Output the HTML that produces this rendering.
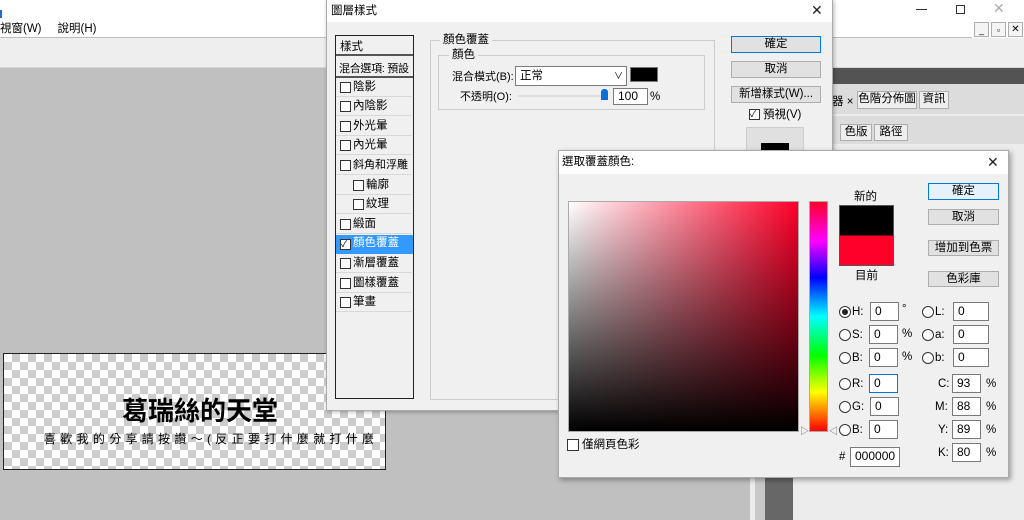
<!DOCTYPE html>
<html><head><meta charset="utf-8"><style>
*{box-sizing:border-box;margin:0;padding:0}
body{width:1024px;height:520px;overflow:hidden;position:relative;background:#c0c0c0;font-family:"Liberation Sans","Noto Sans CJK TC",sans-serif;font-size:12px;color:#000}
.a{position:absolute}
.t{position:absolute;white-space:nowrap;font-size:11.5px;line-height:14px}
.btn{position:absolute;background:#e1e1e1;border:1px solid #adadad;text-align:center;font-size:11.5px;line-height:14px;white-space:nowrap;overflow:hidden}
.inp{position:absolute;background:#fff;border:1px solid #7a7a7a;font-size:12px;line-height:17px;padding-left:4px}
.cb{position:absolute;width:11px;height:11px;border:1px solid #333;background:#fff}
.rd{position:absolute;width:12px;height:12px;border:1px solid #333;border-radius:50%;background:#fff}
.row{position:absolute;left:336px;width:76px;height:19px;border-bottom:1px solid #d8d8d8}
.x{position:absolute;font-size:14px;line-height:14px;font-family:"DejaVu Sans",sans-serif;font-weight:normal;color:#222}
</style></head><body>
<!-- app chrome -->
<div class="a" style="left:0;top:0;width:1024px;height:38px;background:#fff"></div>
<div class="a" style="left:0;top:10px;width:2px;height:8px;background:#1e6bd6"></div>
<div class="t" style="left:0;top:22px">視窗(W)&nbsp;&nbsp;&nbsp;&nbsp;&nbsp;說明(H)</div>
<div class="a" style="left:0;top:37px;width:1024px;height:31px;background:#eeeeee;border-top:1px solid #bdbdbd;border-bottom:1px solid #d6d6d6"></div>
<div class="a" style="left:916px;top:9px;width:11px;height:1px;background:#333"></div>
<div class="a" style="left:956px;top:5px;width:9px;height:9px;border:1px solid #333"></div>
<div class="x" style="left:993px;top:2px;color:#aaa">✕</div>
<div class="a" style="left:972px;top:22px;width:52px;height:16px;background:#fff"></div>
<div class="btn" style="left:974px;top:22px;width:15px;height:15px;font-size:9px;background:#f4f4f4">_</div>
<div class="btn" style="left:991px;top:22px;width:15px;height:15px;font-size:9px;background:#f4f4f4">▫</div>
<div class="btn" style="left:1008px;top:22px;width:15px;height:15px;font-size:10px;background:#f4f4f4">✕</div>
<!-- right panels -->
<div class="a" style="left:750px;top:68px;width:274px;height:452px;background:#ececec"></div>
<div class="a" style="left:830px;top:68px;width:194px;height:16px;background:#535353"></div>
<div class="a" style="left:830px;top:84px;width:194px;height:30px;background:#dcdcdc"></div>
<div class="btn" style="left:857px;top:91px;width:60px;height:18px;background:#eee">色階分佈圖</div>
<div class="btn" style="left:919px;top:91px;width:30px;height:18px;background:#eee">資訊</div>
<div class="t" style="left:832px;top:95px">器 ×</div>
<div class="a" style="left:830px;top:116px;width:194px;height:28px;background:#dcdcdc"></div>
<div class="btn" style="left:840px;top:124px;width:32px;height:17px;background:#eee">色版</div>
<div class="btn" style="left:874px;top:124px;width:34px;height:17px;background:#eee">路徑</div>
<div class="a" style="left:755px;top:476px;width:10px;height:44px;background:#c8c8c8"></div>
<div class="a" style="left:765px;top:476px;width:28px;height:44px;background:#676767"></div>
<!-- document canvas -->
<div class="a" style="left:3px;top:353px;width:383px;height:117px;border:1px solid #222;background-color:#fff;background-image:linear-gradient(45deg,#ccc 25%,transparent 25%,transparent 75%,#ccc 75%),linear-gradient(45deg,#ccc 25%,transparent 25%,transparent 75%,#ccc 75%);background-size:16px 16px;background-position:0 0,8px 8px"></div>
<div class="t" style="left:122px;top:396px;font-size:26px;line-height:30px;font-weight:bold">葛瑞絲的天堂</div>
<div class="t" style="left:44px;top:432px;font-size:12px;letter-spacing:4.3px">喜歡我的分享請按讚～(反正要打什麼就打什麼</div>
<!-- layer style dialog -->
<div class="a" style="left:326px;top:0;width:507px;height:411px;background:#f0f0f0;border:1px solid #aaa;box-shadow:1px 1px 4px rgba(0,0,0,.3)"></div>
<div class="a" style="left:327px;top:0;width:505px;height:22px;background:#fff"></div>
<div class="t" style="left:331px;top:4px">圖層樣式</div>
<div class="x" style="left:811px;top:4px">✕</div>
<div class="a" style="left:335px;top:35px;width:79px;height:364px;border:1px solid #222;background:#f0f0f0"></div>
<div class="a" style="left:336px;top:36px;width:77px;height:20px;border-bottom:2px solid #555"></div>
<div class="t" style="left:340px;top:40px">樣式</div>
<div class="a" style="left:336px;top:58px;width:77px;height:20px;border-bottom:2px solid #555"></div>
<div class="t" style="left:339px;top:62px;font-size:11px;letter-spacing:-0.3px">混合選項: 預設</div>
<div class="row" style="top:78px"></div><div class="cb" style="left:340px;top:82px"></div><div class="t" style="left:353px;top:80px">陰影</div>
<div class="row" style="top:97px"></div><div class="cb" style="left:340px;top:101px"></div><div class="t" style="left:353px;top:99px">內陰影</div>
<div class="row" style="top:117px"></div><div class="cb" style="left:340px;top:121px"></div><div class="t" style="left:353px;top:119px">外光暈</div>
<div class="row" style="top:136px"></div><div class="cb" style="left:340px;top:140px"></div><div class="t" style="left:353px;top:138px">內光暈</div>
<div class="row" style="top:156px"></div><div class="cb" style="left:340px;top:160px"></div><div class="t" style="left:353px;top:158px;font-size:11px">斜角和浮雕</div>
<div class="row" style="top:176px"></div><div class="cb" style="left:353px;top:180px"></div><div class="t" style="left:366px;top:178px">輪廓</div>
<div class="row" style="top:195px"></div><div class="cb" style="left:353px;top:199px"></div><div class="t" style="left:366px;top:197px">紋理</div>
<div class="row" style="top:215px"></div><div class="cb" style="left:340px;top:219px"></div><div class="t" style="left:353px;top:217px">緞面</div>
<div class="a" style="left:336px;top:235px;width:77px;height:19px;background:#3399ff"></div><div class="cb" style="left:340px;top:239px;font-size:9px;line-height:9px">✓</div><div class="t" style="left:353px;top:236px;color:#fff">顏色覆蓋</div>
<div class="row" style="top:254px"></div><div class="cb" style="left:340px;top:258px"></div><div class="t" style="left:353px;top:256px">漸層覆蓋</div>
<div class="row" style="top:274px"></div><div class="cb" style="left:340px;top:278px"></div><div class="t" style="left:353px;top:276px">圖樣覆蓋</div>
<div class="row" style="top:293px"></div><div class="cb" style="left:340px;top:297px"></div><div class="t" style="left:353px;top:295px">筆畫</div>
<div class="a" style="left:430px;top:40px;width:285px;height:360px;border:1px solid #ccc"></div>
<div class="t" style="left:440px;top:33px;background:#f0f0f0;padding:0 3px">顏色覆蓋</div>
<div class="a" style="left:438px;top:55px;width:267px;height:55px;border:1px solid #ccc"></div>
<div class="t" style="left:449px;top:48px;background:#f0f0f0;padding:0 3px">顏色</div>
<div class="t" style="left:452px;top:70px;font-size:11px">混合模式(B):</div>
<div class="a" style="left:515px;top:66px;width:112px;height:20px;border:1px solid #7a7a7a;background:#fff"></div>
<div class="t" style="left:520px;top:69px">正常</div>
<div class="t" style="left:614px;top:69px;font-size:9px">∨</div>
<div class="a" style="left:630px;top:67px;width:28px;height:15px;background:#000;border:1px solid #777"></div>
<div class="t" style="left:460px;top:90px;font-size:11px">不透明(O):</div>
<div class="a" style="left:518px;top:95px;width:90px;height:2px;background:#ddd"></div>
<div class="a" style="left:601px;top:89px;width:7px;height:11px;background:#0a6fd6;border-radius:3px 3px 0 0"></div>
<div class="inp" style="left:613px;top:88px;width:35px;height:17px;line-height:15px">100</div>
<div class="t" style="left:650px;top:90px">%</div>
<div class="btn" style="left:731px;top:36px;width:90px;height:17px;border:1px solid #0078d7">確定</div>
<div class="btn" style="left:731px;top:61px;width:90px;height:17px">取消</div>
<div class="btn" style="left:731px;top:86px;width:90px;height:17px">新增樣式(W)...</div>
<div class="cb" style="left:749px;top:109px;font-size:9px;line-height:9px">✓</div>
<div class="t" style="left:763px;top:108px">預視(V)</div>
<div class="a" style="left:746px;top:127px;width:58px;height:30px;background:#e0e0e0;border:1px solid #ccc"></div>
<div class="a" style="left:761px;top:143px;width:28px;height:10px;background:#000"></div>
<!-- color picker -->
<div class="a" style="left:558px;top:150px;width:451px;height:328px;background:#f0f0f0;border:1px solid #aaa;box-shadow:2px 2px 5px rgba(0,0,0,.35)"></div>
<div class="a" style="left:559px;top:151px;width:449px;height:23px;background:#fff"></div>
<div class="t" style="left:562px;top:155px">選取覆蓋顏色:</div>
<div class="x" style="left:987px;top:156px">✕</div>
<div class="a" style="left:568px;top:201px;width:231px;height:231px;border:1px solid #aaa;background:linear-gradient(to bottom,rgba(0,0,0,0),#000),linear-gradient(to right,#fff,#ff0028)"></div>
<div class="a" style="left:809px;top:201px;width:19px;height:231px;border:1px solid #aaa;background:linear-gradient(to bottom,#ff0028,#ff00ff 17%,#0000ff 33%,#00ffff 50%,#00ff00 67%,#ffff00 83%,#ff0000)"></div>
<div class="t" style="left:800px;top:424px;font-size:9px;color:#666">▷</div>
<div class="t" style="left:829px;top:424px;font-size:9px;color:#666">◁</div>
<div class="cb" style="left:567px;top:439px;width:12px;height:12px"></div>
<div class="t" style="left:582px;top:438px">僅網頁色彩</div>
<div class="t" style="left:854px;top:190px">新的</div>
<div class="a" style="left:839px;top:205px;width:55px;height:61px;border:1px solid #555;background:linear-gradient(#000 50%,#ff0028 50%)"></div>
<div class="t" style="left:855px;top:269px">目前</div>
<div class="btn" style="left:928px;top:183px;width:71px;height:17px;background:#e5f1fb;border:1px solid #0078d7">確定</div>
<div class="btn" style="left:928px;top:209px;width:71px;height:16px">取消</div>
<div class="btn" style="left:928px;top:240px;width:71px;height:16px">增加到色票</div>
<div class="btn" style="left:928px;top:271px;width:71px;height:16px">色彩庫</div>
<!-- HSB -->
<div class="rd" style="left:839px;top:306px"></div><div class="a" style="left:842px;top:309px;width:6px;height:6px;border-radius:50%;background:#222"></div>
<div class="t" style="left:852px;top:305px">H:</div><div class="inp" style="left:870px;top:302px;width:29px;height:19px">0</div><div class="t" style="left:902px;top:302px">°</div>
<div class="rd" style="left:839px;top:329px"></div><div class="t" style="left:852px;top:328px">S:</div><div class="inp" style="left:869px;top:325px;width:29px;height:19px">0</div><div class="t" style="left:902px;top:327px">%</div>
<div class="rd" style="left:839px;top:352px"></div><div class="t" style="left:852px;top:351px">B:</div><div class="inp" style="left:869px;top:348px;width:29px;height:19px">0</div><div class="t" style="left:902px;top:350px">%</div>
<div class="rd" style="left:922px;top:306px"></div><div class="t" style="left:935px;top:305px">L:</div><div class="inp" style="left:953px;top:302px;width:36px;height:19px">0</div>
<div class="rd" style="left:922px;top:329px"></div><div class="t" style="left:935px;top:328px">a:</div><div class="inp" style="left:953px;top:325px;width:36px;height:19px">0</div>
<div class="rd" style="left:922px;top:352px"></div><div class="t" style="left:935px;top:351px">b:</div><div class="inp" style="left:953px;top:348px;width:36px;height:19px">0</div>
<!-- RGB -->
<div class="rd" style="left:839px;top:378px"></div><div class="t" style="left:852px;top:377px">R:</div><div class="inp" style="left:869px;top:374px;width:29px;height:19px;border-color:#0078d7">0</div>
<div class="rd" style="left:839px;top:401px"></div><div class="t" style="left:852px;top:400px">G:</div><div class="inp" style="left:870px;top:397px;width:29px;height:19px">0</div>
<div class="rd" style="left:839px;top:424px"></div><div class="t" style="left:852px;top:423px">B:</div><div class="inp" style="left:869px;top:420px;width:29px;height:19px">0</div>
<div class="t" style="left:938px;top:377px">C:</div><div class="inp" style="left:952px;top:374px;width:29px;height:19px">93</div><div class="t" style="left:986px;top:377px">%</div>
<div class="t" style="left:935px;top:400px">M:</div><div class="inp" style="left:952px;top:397px;width:29px;height:19px">88</div><div class="t" style="left:986px;top:400px">%</div>
<div class="t" style="left:938px;top:423px">Y:</div><div class="inp" style="left:952px;top:420px;width:29px;height:19px">89</div><div class="t" style="left:986px;top:423px">%</div>
<div class="t" style="left:938px;top:446px">K:</div><div class="inp" style="left:952px;top:443px;width:29px;height:19px">80</div><div class="t" style="left:986px;top:446px">%</div>
<div class="t" style="left:839px;top:450px">#</div><div class="inp" style="left:850px;top:447px;width:50px;height:20px">000000</div>
</body></html>
